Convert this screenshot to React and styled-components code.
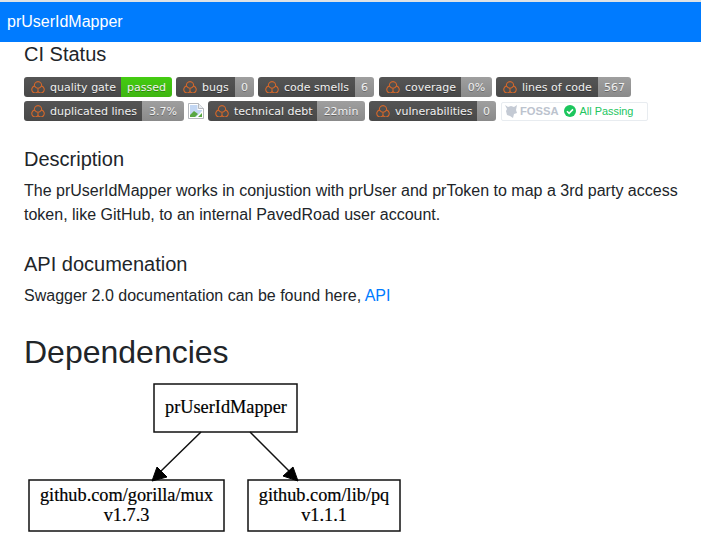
import React from "react";
import styled, { createGlobalStyle } from "styled-components";

const GlobalStyle = createGlobalStyle`
	html, body {
		margin: 0;
		padding: 0;
		background: #fff;
		overflow: hidden;
	}
	body {
		font-family: "Liberation Sans", Arial, sans-serif;
		font-size: 16px;
		line-height: 24px;
		color: #212529;
	}
`;

const Page = styled.div`
	width: 701px;
	height: 545px;
	overflow: hidden;
	border-top: 2px solid #dee2e6;
	box-sizing: border-box;
`;

const Navbar = styled.header`
	height: 40px;
	background: #007bff;
	color: #fff;
	font-size: 16px;
	display: flex;
	align-items: center;
	padding-left: 7px;
`;

const Content = styled.main`
	padding: 0 15px 0 24px;
`;

const SubTitle = styled.h2`
	margin: ${(p) => p.$top || 0}px 0 8px;
	font-size: 20px;
	font-weight: 400;
	line-height: 24px;
`;

const BadgeRow = styled.div`
	display: flex;
	align-items: center;
	height: 20px;
	margin-bottom: 4px;
	margin-top: ${(p) => p.$top || 0}px;
`;

const Badge = styled.div`
	display: flex;
	height: 20px;
	margin-right: ${(p) => p.$gap || 4}px;
	border-radius: 3px;
	overflow: hidden;
	font-family: "DejaVu Sans", Verdana, sans-serif;
	font-size: 11px;
	line-height: 21px;
	color: #f0f0f0;
`;

const BadgeLabel = styled.div`
	display: flex;
	align-items: center;
	width: ${(p) => p.$width}px;
	padding-left: 7px;
	box-sizing: border-box;
	background: linear-gradient(#555, #484848);
	text-shadow: 0 1px 0 rgba(1, 1, 1, 0.3);

	svg {
		margin-right: 5px;
		flex: none;
	}
`;

const BadgeValue = styled.div`
	width: ${(p) => p.$width}px;
	text-align: center;
	background: ${(p) =>
		p.$ok ? "linear-gradient(#4c1, #3fb511)" : "linear-gradient(#9f9f9f, #8a8a8a)"};
	text-shadow: 0 1px 0 rgba(1, 1, 1, 0.3);
`;

const BrokenImage = styled.svg`
	display: block;
	margin-right: 4px;
	flex: none;
`;

const FossaBadge = styled.div`
	display: flex;
	align-items: center;
	width: 147px;
	height: 19px;
	margin-left: 1px;
	padding-left: 2px;
	box-sizing: border-box;
	border: 1px solid #e8ecf0;
	border-radius: 2px;
	font-size: 10.9px;
	color: #22c55e;
`;

const FossaName = styled.span`
	margin: 0 5px 0 2px;
	font-size: 11.2px;
	font-weight: 700;
	color: #bcc3ce;
`;

const PassingText = styled.span`
	margin-left: 4px;
`;

const Paragraph = styled.p`
	margin: 0;
`;

const Link = styled.a`
	color: #007bff;
	text-decoration: none;
`;

const MainTitle = styled.h1`
	margin: 25px 0 0;
	font-size: 32px;
	font-weight: 400;
	line-height: 38px;
`;

const Graph = styled.svg`
	display: block;
	margin-top: 9px;
`;

const CloudIcon = () => (
	<svg width="14" height="12" viewBox="1 0.800 12 10.300" fill="none" stroke="#d2672b" strokeWidth="0.950">
		<path d="M4 5.200A3.100 3.100 0 1 1 10 5.200A3 3 0 1 1 7 10A3 3 0 1 1 4 5.200Z" />
		<path d="M4 5.200Q5.500 7 7 7Q8.500 7 10 5.200M7 7V10" />
	</svg>
);

const SonarBadge = ({ label, labelWidth, value, valueWidth, ok, gap }) => (
	<Badge $gap={gap}>
		<BadgeLabel $width={labelWidth}>
			<CloudIcon />
			{label}
		</BadgeLabel>
		<BadgeValue $width={valueWidth} $ok={ok}>
			{value}
		</BadgeValue>
	</Badge>
);

function App() {
	return (
		<Page>
			<GlobalStyle />
			<Navbar>prUserIdMapper</Navbar>
			<Content>
				<SubTitle>CI Status</SubTitle>
				<BadgeRow $top={11}>
					<SonarBadge label="quality gate" labelWidth={97} value="passed" valueWidth={51} ok />
					<SonarBadge label="bugs" labelWidth={59} value="0" valueWidth={19} />
					<SonarBadge label="code smells" labelWidth={97} value="6" valueWidth={19} gap={5} />
					<SonarBadge label="coverage" labelWidth={82} value="0%" valueWidth={31} />
					<SonarBadge label="lines of code" labelWidth={102} value="567" valueWidth={33} />
				</BadgeRow>
				<BadgeRow>
					<SonarBadge label="duplicated lines" labelWidth={118} value="3.7%" valueWidth={42} />
					<BrokenImage width="16" height="16" viewBox="0 0 16 16">
						<path d="M.5.5h10l5 5v10H.5z" fill="#fff" stroke="#b5b8bd" />
						<path d="M10.500.5v5h5" fill="#e8ebef" stroke="#b5b8bd" />
						<path d="M2 2h7.500v5H14v1l-6 6H2z" fill="#c3d7f3" />
						<path d="M2 14v-2l4-4 4 3-3 3z" fill="#58a743" />
						<path d="M10 14l4-4v4z" fill="#58a743" />
					</BrokenImage>
					<SonarBadge label="technical debt" labelWidth={109} value="22min" valueWidth={48} />
					<SonarBadge label="vulnerabilities" labelWidth={108} value="0" valueWidth={19} />
					<FossaBadge>
						<svg width="14" height="15" viewBox="0 0 14 15" fill="#c4cad4">
							<path d="M1 1l3 2 3-1 3 1 3-2-1 5 1 3-3 1-1 4-3-2-3-1-1-4 1-2z" />
						</svg>
						<FossaName>FOSSA</FossaName>
						<svg width="12" height="12" viewBox="0 0 12 12">
							<circle cx="6" cy="6" r="6" fill="#1cc65d" />
							<path d="M3 6.200l2.100 2.100L9 4.400" fill="none" stroke="#fff" strokeWidth="1.600" />
						</svg>
						<PassingText>All Passing</PassingText>
					</FossaBadge>
				</BadgeRow>
				<SubTitle $top={26}>Description</SubTitle>
				<Paragraph>
					The prUserIdMapper works in conjustion with prUser and prToken to map a 3rd party access
					token, like GitHub, to an internal PavedRoad user account.
				</Paragraph>
				<SubTitle $top={25}>API documenation</SubTitle>
				<Paragraph>
					Swagger 2.0 documentation can be found here, <Link href="#api">API</Link>
				</Paragraph>
				<MainTitle>Dependencies</MainTitle>
				<Graph
					width="400"
					height="165"
					viewBox="24 380 400 165"
					fontFamily="Liberation Serif, serif"
					fontSize="18.300"
					textAnchor="middle"
				>
					<g fill="none" stroke="#111" strokeWidth="1.500">
						<rect x="154" y="384" width="143" height="48" />
						<rect x="29" y="480" width="195" height="51" />
						<rect x="248" y="480" width="152" height="51" />
						<path d="M201 432l-41 40M250 432l40 40" />
					</g>
					<path d="M152 481l5-14 10 10zM298 481l-15-5 10-9z" fill="#000" stroke="#000" />
					<g stroke="#000" strokeWidth="0.200">
						<text x="226" y="413">prUserIdMapper</text>
						<text x="126.500" y="501">github.com/gorilla/mux</text>
						<text x="126.500" y="521">v1.7.3</text>
						<text x="324" y="501">github.com/lib/pq</text>
						<text x="324" y="521">v1.1.1</text>
					</g>
				</Graph>
			</Content>
		</Page>
	);
}

export default App;
